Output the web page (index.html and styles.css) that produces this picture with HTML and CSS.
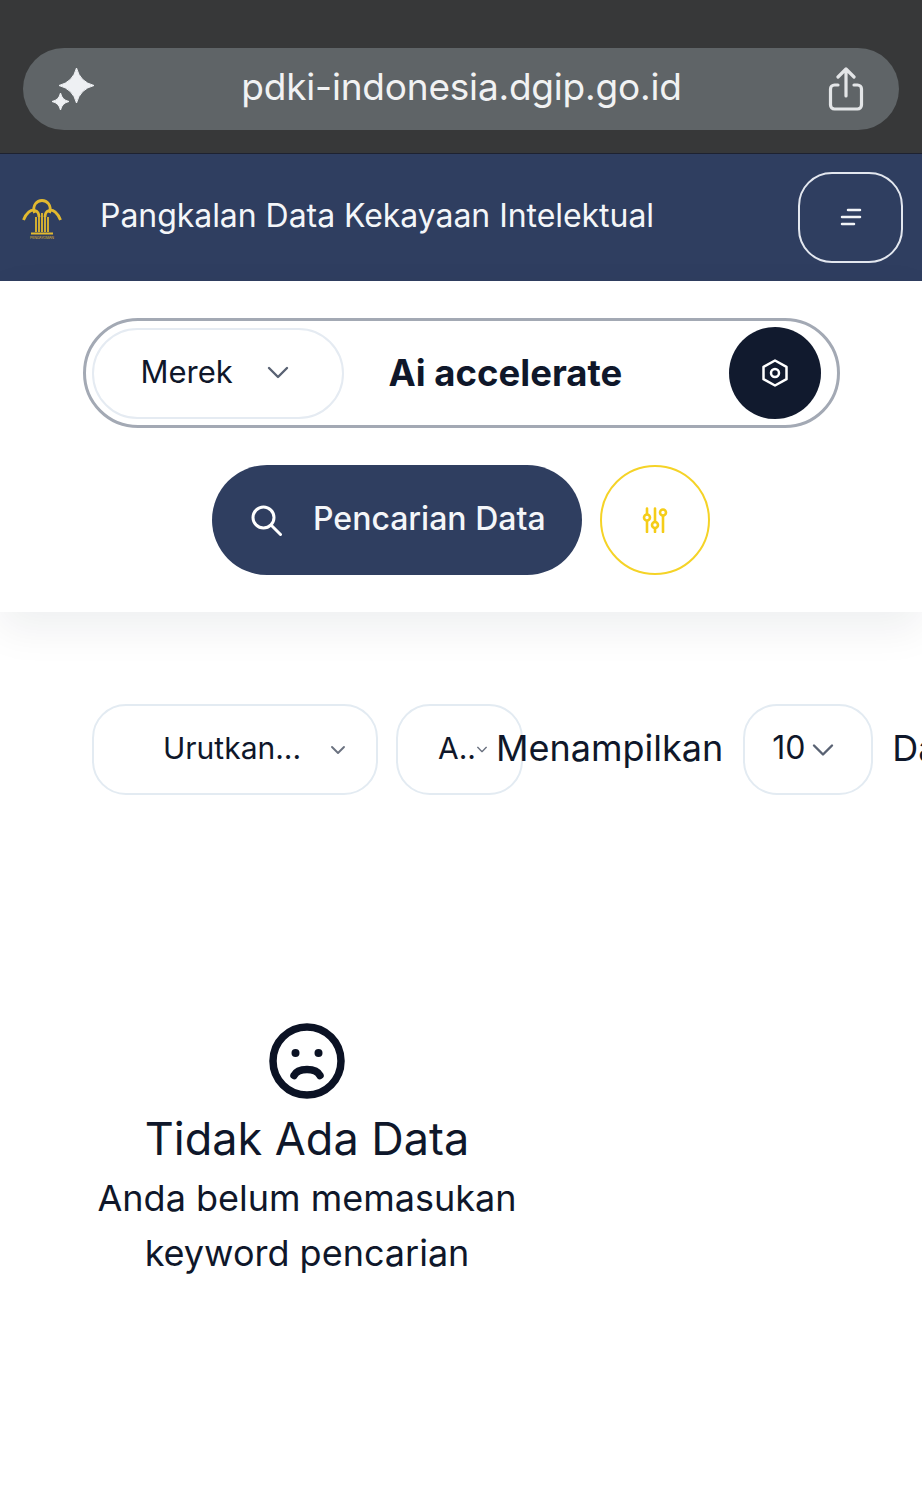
FILE: index.html
```html
<!DOCTYPE html>
<html lang="id">
<head>
    <meta charset="UTF-8">
    <meta name="viewport" content="width=device-width, initial-scale=1.0">
    <title>Pangkalan Data Kekayaan Intelektual</title>
    <link rel="stylesheet" href="styles.css">
</head>
<body>
    <div class="browser-bar">
        <div class="url-pill">
            <svg class="sparkle" viewBox="0 0 46 46" width="46" height="46" fill="#eef0f3" stroke="#eef0f3" stroke-linejoin="round">
                <path d="M25.500 2Q29 16 43 19.500Q29 23 25.500 37Q22 23 8 19.500Q22 16 25.500 2z"/>
                <path d="M9.500 27Q11 34 18 35.500Q11 37 9.500 44Q8 37 1 35.500Q8 34 9.500 27z"/>
            </svg>
            <span class="url-text">pdki-indonesia.dgip.go.id</span>
            <svg class="share" viewBox="0 0 40 46" width="40" height="46" fill="none" stroke="#e3e5e7" stroke-width="3.200" stroke-linecap="round" stroke-linejoin="round">
                <path d="M12 18H8.500a4 4 0 0 0-4 4v16a4 4 0 0 0 4 4h23a4 4 0 0 0 4-4V22a4 4 0 0 0-4-4H28"/>
                <path d="M20 29V3M12 10l8-8 8 8"/>
            </svg>
        </div>
    </div>

    <header class="navbar">
        <svg class="logo" viewBox="0 0 40 41" width="40" height="41" fill="none" stroke="#e2b92f">
            <path d="M12.500 14C10 6 15 1.500 20 1.500S30 6 27.500 14" stroke-width="2.800"/>
            <path d="M1.500 21C4 14 9 10 13 11.500C16 12.500 17 15 17 18" stroke-width="2.800"/>
            <path d="M38.500 21C36 14 31 10 27 11.500C24 12.500 23 15 23 18" stroke-width="2.800"/>
            <path d="M14 18v15M17 16v17M20 14v19M23 16v17M26 18v15" stroke-width="1.800"/>
            <path d="M9 34.500h22" stroke-width="2"/>
            <text class="logo-text" x="20" y="40" text-anchor="middle" textLength="24">PENGAYOMAN</text>
        </svg>
        <span class="nav-title">Pangkalan Data Kekayaan Intelektual</span>
        <button class="menu-btn">
            <svg viewBox="0 0 24 18" width="24" height="18" stroke="#f2f4f7" stroke-width="2.500" stroke-linecap="round">
                <path d="M9 2h12M3 9h18M3 16h12"/>
            </svg>
        </button>
    </header>

    <section class="search-panel">
        <div class="search-field">
            <div class="type-select">
                <span class="type-label">Merek</span>
                <svg viewBox="0 0 24 24" width="24" height="24" fill="none" stroke="#596273" stroke-width="2.400" stroke-linecap="round" stroke-linejoin="round"><path d="M3 7l9 9 9-9"/></svg>
            </div>
            <div class="keyword">Ai accelerate</div>
            <div class="nut-btn">
                <svg viewBox="0 0 30 30" width="30" height="30" fill="none" stroke="#fff" stroke-width="2.500" stroke-linejoin="round">
                    <path d="M15 2.500l11.500 6.300v12.400L15 27.500 3.500 21.200V8.800z"/>
                    <circle cx="15" cy="15" r="4"/>
                </svg>
            </div>
        </div>
        <div class="search-actions">
            <button class="search-btn">
                <svg viewBox="0 0 32 32" width="32" height="32" fill="none" stroke="#fff" stroke-width="3" stroke-linecap="round">
                    <circle cx="13.500" cy="13.500" r="10.500"/>
                    <path d="M21.500 21.500l9 9"/>
                </svg>
                <span class="search-label">Pencarian Data</span>
            </button>
            <button class="filter-btn">
                <svg viewBox="0 0 26 26" width="26" height="26" fill="none" stroke="#f5cd19" stroke-width="2.600" stroke-linecap="round">
                    <path d="M5 1.500v5M5 14v11M13 1.500v13M13 22v3M21 9v16"/>
                    <circle cx="5" cy="10.500" r="3"/>
                    <circle cx="13" cy="18" r="3"/>
                    <circle cx="21" cy="5.500" r="3"/>
                </svg>
            </button>
        </div>
    </section>

    <div class="toolbar">
        <div class="select select-sort">
            <span>Urutkan...</span>
            <svg viewBox="0 0 16 10" width="16" height="10" fill="none" stroke="#6b7280" stroke-width="1.900" stroke-linecap="round" stroke-linejoin="round"><path d="M2 2l6 6 6-6"/></svg>
        </div>
        <div class="select select-order">
            <span>A..</span>
            <svg viewBox="0 0 14 9" width="14" height="9" fill="none" stroke="#6b7280" stroke-width="1.600" stroke-linecap="round" stroke-linejoin="round"><path d="M2 2l5 5 5-5"/></svg>
        </div>
        <span class="label label-show">Menampilkan</span>
        <div class="select select-count">
            <span>10</span>
            <svg viewBox="0 0 24 14" width="24" height="14" fill="none" stroke="#596273" stroke-width="2.400" stroke-linecap="round" stroke-linejoin="round"><path d="M3 2.500l9 9 9-9"/></svg>
        </div>
        <span class="label label-rest">Data</span>
    </div>

    <div class="empty-state">
        <svg viewBox="0 0 76 76" width="76" height="76" fill="none" stroke="#0b1224" stroke-width="7.500" stroke-linecap="round">
            <circle cx="38" cy="38" r="34"/>
            <path d="M25 52.500c4-8 22-8 26 0"/>
            <circle cx="26.500" cy="30" r="4" fill="#0b1224" stroke="none"/>
            <circle cx="49.500" cy="30" r="4" fill="#0b1224" stroke="none"/>
        </svg>
        <h2>Tidak Ada Data</h2>
        <p>Anda belum memasukan keyword pencarian</p>
    </div>
</body>
</html>
```

FILE: styles.css
```css
html, body {
    margin: 0;
    padding: 0;
    height: 1500px;
    overflow: hidden;
}
body {
    font-family: Inter, "Noto Sans", sans-serif;
    background-color: #fff;
    color: #0f172a;
}
button {
    font-family: inherit;
    padding: 0;
    cursor: pointer;
    background: none;
    border: none;
}
.browser-bar {
    height: 154px;
    box-sizing: border-box;
    padding: 48px 23px 0;
    background-color: #373839;
    border-bottom: 1px solid #1e2230;
}
.url-pill {
    height: 82px;
    padding: 0 33px 0 28px;
    display: flex;
    align-items: center;
    justify-content: space-between;
    background-color: #5f6467;
    border-radius: 41px;
}
.sparkle {
    flex: none;
}
.url-text {
    font-size: 37px;
    line-height: 78px;
    height: 82px;
    color: #f1f2f3;
    letter-spacing: -0.2px;
}
.share {
    flex: none;
    margin-top: 2px;
}
.navbar {
    height: 127px;
    box-sizing: border-box;
    padding: 0 19px 0 22px;
    display: flex;
    align-items: center;
    background-color: #2f3e60;
}
.logo {
    flex: none;
    margin-top: 3px;
}
.logo-text {
    font-size: 3.600px;
    fill: #e2b92f;
    stroke: none;
}
.nav-title {
    margin-left: 38px;
    padding-bottom: 4px;
    font-size: 32px;
    line-height: 40px;
    color: #f4f6f9;
    letter-spacing: -0.05px;
}
.menu-btn {
    margin-left: auto;
    margin-top: -1px;
    width: 105px;
    height: 91px;
    display: flex;
    align-items: center;
    justify-content: center;
    border: 2px solid #e3e7ef;
    border-radius: 34px;
}
.search-panel {
    height: 331px;
    box-sizing: border-box;
    padding-top: 37px;
    background-color: #fff;
    box-shadow: 0 16px 40px rgba(15, 23, 42, 0.07);
}
.search-field {
    width: 757px;
    height: 110px;
    box-sizing: border-box;
    margin: 0 auto;
    padding: 0 16px 0 6px;
    display: flex;
    align-items: center;
    border: 3px solid #a3a9b4;
    border-radius: 55px;
}
.type-select {
    width: 252px;
    height: 91px;
    box-sizing: border-box;
    padding: 0 52px 0 47px;
    display: flex;
    align-items: center;
    justify-content: space-between;
    font-size: 31px;
    border: 2px solid #e5ebf2;
    border-radius: 46px;
}
.type-label {
    padding-bottom: 3px;
}
.keyword {
    margin-left: 45px;
    font-size: 36.500px;
    font-weight: 650;
}
.nut-btn {
    margin-left: auto;
    width: 92px;
    height: 92px;
    display: flex;
    align-items: center;
    justify-content: center;
    background-color: #111a2e;
    border-radius: 50%;
}
.search-actions {
    margin-top: 37px;
    display: flex;
    justify-content: center;
    gap: 18px;
}
.search-btn {
    width: 370px;
    height: 110px;
    box-sizing: border-box;
    padding-left: 38px;
    display: flex;
    align-items: center;
    gap: 31px;
    font-size: 32px;
    font-weight: 500;
    color: #f4f6f9;
    background-color: #2f3e60;
    border-radius: 55px;
}
.search-label {
    padding-bottom: 4px;
}
.filter-btn {
    width: 110px;
    height: 110px;
    display: flex;
    align-items: center;
    justify-content: center;
    border: 2.500px solid #f5d327;
    border-radius: 50%;
}
.toolbar {
    margin-top: 92px;
    padding-left: 92px;
    width: 900px;
    display: flex;
    align-items: center;
    font-size: 30px;
    line-height: 36px;
}
.select {
    height: 91px;
    box-sizing: border-box;
    display: flex;
    align-items: center;
    flex: none;
    padding-bottom: 3px;
    border: 2px solid #e3ebf2;
    border-radius: 34px;
}
.select svg {
    margin-top: 3px;
}
.select-sort {
    width: 286px;
    padding-left: 69px;
    padding-right: 30px;
    justify-content: space-between;
}
.select-order {
    width: 127px;
    margin-left: 18px;
    padding-left: 40px;
    padding-right: 33px;
    justify-content: space-between;
}
.select-count {
    width: 130px;
    margin-left: 20px;
    padding-left: 27px;
    padding-right: 36px;
    font-size: 32px;
    justify-content: space-between;
}
.label {
    flex: none;
    font-size: 36px;
    padding-bottom: 3px;
}
.label-show {
    margin-left: -27px;
}
.label-rest {
    margin-left: 19px;
}
.empty-state {
    width: 430px;
    margin: 228px 0 0 92px;
    display: flex;
    flex-direction: column;
    align-items: center;
    text-align: center;
}
.empty-state h2 {
    margin: 11px 0 0;
    font-size: 45px;
    font-weight: 400;
    line-height: 58px;
}
.empty-state p {
    margin: 3px 0 0;
    font-size: 36px;
    line-height: 55px;
}
```
